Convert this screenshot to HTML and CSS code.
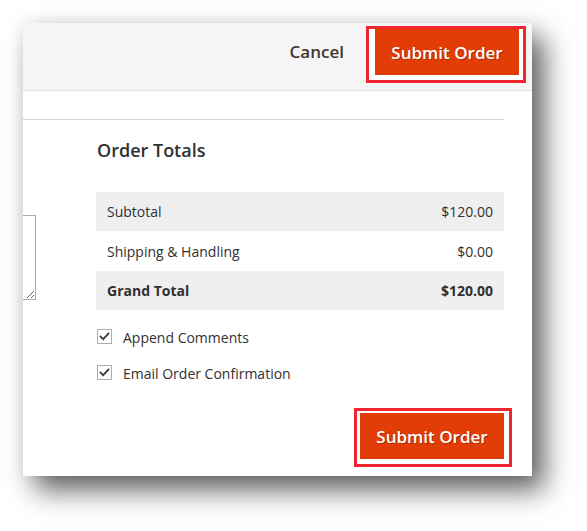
FILE: index.html
```html
<!DOCTYPE html>
<html lang="en">
<head>
<meta charset="utf-8">
<title>Order Totals</title>
<link rel="stylesheet" href="styles.css">
</head>
<body>
<div class="panel">
  <header class="page-actions">
    <button class="btn-cancel" type="button">Cancel</button>
    <span class="highlight highlight-top">
      <button class="btn-primary" type="button">Submit Order</button>
    </span>
  </header>
  <section class="order-section">
    <div class="comments-col">
      <textarea class="comment-area" aria-label="Order comments"></textarea>
    </div>
    <div class="totals-col">
      <h2 class="totals-title">Order Totals</h2>
      <table class="totals-table">
        <tr class="row-shaded"><td>Subtotal</td><td class="amount">$120.00</td></tr>
        <tr class="row-plain"><td>Shipping &amp; Handling</td><td class="amount">$0.00</td></tr>
        <tr class="row-shaded row-grand"><td>Grand Total</td><td class="amount">$120.00</td></tr>
      </table>
      <div class="options">
        <label class="option">
          <span class="checkbox"><svg viewBox="0 0 13 13" width="13" height="13"><path d="M2.6 6.6 L5.2 9.2 L10.4 3.6" fill="none" stroke="#3d3d3d" stroke-width="1.9" stroke-linecap="square"/></svg></span>
          <span class="option-label">Append Comments</span>
        </label>
        <label class="option">
          <span class="checkbox"><svg viewBox="0 0 13 13" width="13" height="13"><path d="M2.6 6.6 L5.2 9.2 L10.4 3.6" fill="none" stroke="#3d3d3d" stroke-width="1.9" stroke-linecap="square"/></svg></span>
          <span class="option-label">Email Order Confirmation</span>
        </label>
      </div>
      <div class="bottom-actions">
        <span class="highlight highlight-bottom">
          <button class="btn-primary" type="button">Submit Order</button>
        </span>
      </div>
    </div>
  </section>
</div>
</body>
</html>
```

FILE: styles.css
```css
html, body {
  margin: 0;
  padding: 0;
  background: #ffffff;
}

body {
  font-family: "Open Sans", "Noto Sans", "DejaVu Sans", sans-serif;
  color: #303030;
  width: 587px;
  height: 531px;
  overflow: hidden;
}

.panel {
  margin: 23px 0 0 23px;
  width: 509px;
  height: 453px;
  background: #ffffff;
  box-shadow: 12px 14px 26px rgba(0, 0, 0, 0.62), 0 0 14px rgba(0, 0, 0, 0.07);
  overflow: hidden;
  box-sizing: border-box;
}

.page-actions {
  height: 68px;
  box-sizing: border-box;
  background: #f5f5f5;
  border-bottom: 1px solid #e3e3e3;
  display: flex;
  justify-content: flex-end;
  align-items: flex-start;
  padding: 3px 6px 0 0;
}

.btn-cancel {
  font-family: inherit;
  font-weight: 600;
  font-size: 17px;
  color: #41362f;
  background: none;
  border: 0;
  padding: 0;
  height: 46px;
  line-height: 46px;
  margin: 3px 22px 0 0;
}

.highlight {
  display: flex;
  border: 3px solid #f0262f;
  background: #ffffff;
}

.highlight-top {
  padding: 0 4px 5px 6px;
}

.highlight-bottom {
  padding: 2px 5px 5px 3px;
}

.btn-primary {
  font-family: inherit;
  font-weight: 600;
  font-size: 17px;
  color: #ffffff;
  background: #e23c07;
  border: 0;
  width: 144px;
  height: 46px;
  padding: 0;
  text-shadow: 1px 1px 0 rgba(0, 0, 0, 0.25);
}

.order-section {
  margin: 28px 28px 0 0;
  border-top: 1px solid #d4d4d4;
  display: grid;
  grid-template-columns: 13px 60px 1fr;
}

.comments-col {
  grid-column: 1;
  display: flex;
  justify-content: flex-end;
  overflow: hidden;
  padding-top: 95px;
}

.comment-area {
  flex: 0 0 auto;
  width: 200px;
  height: 85px;
  box-sizing: border-box;
  border: 1px solid #adadad;
  border-radius: 0;
  padding: 0;
  margin: 0;
  resize: both;
  background: #ffffff;
}

.totals-col {
  grid-column: 3;
  padding-top: 19px;
}

.totals-title {
  margin: 0;
  font-size: 18px;
  line-height: 22px;
  font-weight: 600;
  color: #303030;
  padding-left: 1px;
}

.totals-table {
  margin-top: 31px;
  width: 100%;
  border-collapse: collapse;
  font-size: 14px;
}

.totals-table td {
  padding: 0 11px;
  line-height: 19px;
}

.row-shaded {
  background: #efefef;
  height: 39px;
}

.row-plain {
  height: 40px;
}

.row-grand td {
  font-weight: 700;
}

.amount {
  text-align: right;
}

.options {
  margin-top: 18px;
  display: flex;
  flex-direction: column;
  gap: 16px;
  padding-left: 1px;
}

.option {
  display: flex;
  align-items: flex-start;
  height: 20px;
  font-size: 14px;
  line-height: 20px;
}

.checkbox {
  width: 15px;
  height: 15px;
  box-sizing: border-box;
  border: 1px solid #adadad;
  background: #ffffff;
  margin: 1px 11px 0 0;
  display: flex;
  align-items: center;
  justify-content: center;
}

.checkbox svg {
  display: block;
}

.bottom-actions {
  margin: 24px -8px 0 0;
  display: flex;
  justify-content: flex-end;
}
```
